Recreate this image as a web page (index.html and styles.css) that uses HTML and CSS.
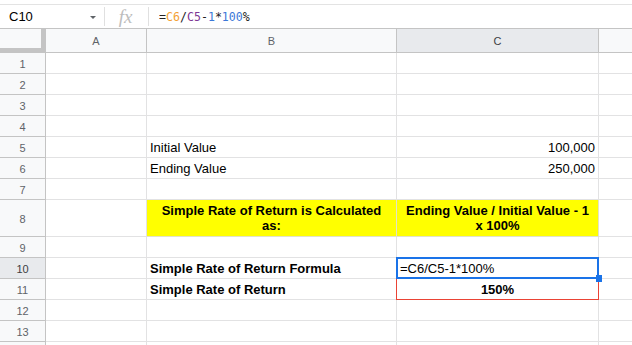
FILE: index.html
```html
<!DOCTYPE html>
<html>
<head>
<meta charset="utf-8">
<link rel="stylesheet" href="styles.css">
</head>
<body>
<div class="fbar">
  <div class="namebox"><span class="ref">C10</span><span class="caret"></span></div>
  <div class="sep"></div>
  <div class="fx">fx</div>
  <div class="sep"></div>
  <div class="formula">=<span class="r1">C6</span>/<span class="r2">C5</span>-<span class="num">1</span>*<span class="num">100</span>%</div>
</div>
<div class="sheet">
  <div class="corner"></div>
  <div class="ch">A</div>
  <div class="ch">B</div>
  <div class="ch sel">C</div>
  <div class="ch last"></div>

  <div class="rh">1</div><div class="c"></div><div class="c"></div><div class="c"></div><div class="c last"></div>
  <div class="rh">2</div><div class="c"></div><div class="c"></div><div class="c"></div><div class="c last"></div>
  <div class="rh">3</div><div class="c"></div><div class="c"></div><div class="c"></div><div class="c last"></div>
  <div class="rh">4</div><div class="c"></div><div class="c"></div><div class="c"></div><div class="c last"></div>
  <div class="rh">5</div><div class="c"></div><div class="c">Initial Value</div><div class="c right">100,000</div><div class="c last"></div>
  <div class="rh">6</div><div class="c"></div><div class="c">Ending Value</div><div class="c right">250,000</div><div class="c last"></div>
  <div class="rh">7</div><div class="c"></div><div class="c"></div><div class="c"></div><div class="c last"></div>
  <div class="rh">8</div><div class="c"></div><div class="c hl">Simple Rate of Return is Calculated as:</div><div class="c hl">Ending Value / Initial Value - 1 x 100%</div><div class="c last"></div>
  <div class="rh">9</div><div class="c"></div><div class="c"></div><div class="c"></div><div class="c last"></div>
  <div class="rh sel">10</div><div class="c"></div><div class="c bold">Simple Rate of Return Formula</div><div class="c active">=C6/C5-1*100%</div><div class="c last"></div>
  <div class="rh">11</div><div class="c"></div><div class="c bold">Simple Rate of Return</div><div class="c bold center redbox">150%</div><div class="c last"></div>
  <div class="rh">12</div><div class="c"></div><div class="c"></div><div class="c"></div><div class="c last"></div>
  <div class="rh">13</div><div class="c"></div><div class="c"></div><div class="c"></div><div class="c last"></div>
  <div class="rh"></div><div class="c"></div><div class="c"></div><div class="c"></div><div class="c last"></div>
</div>
</body>
</html>
```

FILE: styles.css
```css
* { box-sizing: border-box; }
html, body { margin: 0; padding: 0; background: #fff; }
body {
  width: 632px;
  height: 345px;
  overflow: hidden;
  font-family: "Liberation Sans", Arial, sans-serif;
  color: #000;
}
.fbar {
  margin-top: 4px;
  border-top: 1px solid #e3e3e3;
  height: 24px;
  display: flex;
  align-items: center;
}
.namebox {
  width: 104px;
  height: 100%;
  display: flex;
  align-items: center;
  padding-left: 9px;
  padding-right: 8px;
  font-size: 13px;
  color: #000;
}
.ref { flex: 1; }
.caret {
  width: 0;
  height: 0;
  border-left: 3px solid transparent;
  border-right: 3px solid transparent;
  border-top: 3px solid #5f6368;
  margin-top: 1px;
}
.sep {
  width: 1px;
  height: 19px;
  background: #e0e0e0;
}
.fx {
  width: 43px;
  text-align: center;
  font-family: "Liberation Serif", "Times New Roman", serif;
  font-style: italic;
  font-size: 19px;
  color: #bdbdbd;
  line-height: 20px;
  padding-right: 2px;
}
.formula {
  padding-left: 10px;
  font-family: "DejaVu Sans Mono", monospace;
  font-size: 11.6px;
  color: #222;
  padding-top: 1px;
}
.r1 { color: #f4a135; }
.r2 { color: #7e3794; }
.num { color: #3c78d8; }

.sheet {
  display: grid;
  grid-template-columns: 46px 101px 250px 202px 1fr;
  grid-template-rows: 24px repeat(7, 21px) 37px repeat(6, 21px);
  border-top: 1px solid #c4c4c4;
}
.corner {
  background: #f8f9fa;
  border-right: 5px solid #c4c4c4;
  border-bottom: 5px solid #c4c4c4;
}
.ch {
  background: #f8f9fa;
  border-right: 1px solid #c4c4c4;
  border-bottom: 1px solid #c4c4c4;
  display: flex;
  align-items: center;
  justify-content: center;
  font-size: 11px;
  color: #5f6368;
  padding-top: 1px;
}
.ch.sel { background: #e8eaed; color: #3c4043; }
.ch.last { border-right: none; }
.rh {
  background: #f8f9fa;
  border-right: 1px solid #c4c4c4;
  border-bottom: 1px solid #c4c4c4;
  display: flex;
  align-items: center;
  justify-content: center;
  font-size: 11px;
  color: #5f6368;
  padding-top: 1px;
}
.rh.sel { background: #e8eaed; color: #3c4043; }
.c {
  border-right: 1px solid #e2e2e3;
  border-bottom: 1px solid #e2e2e3;
  font-size: 13px;
  line-height: 15px;
  padding: 0 3px 2px 3px;
  display: flex;
  align-items: flex-end;
  white-space: nowrap;
  position: relative;
}
.c.last { border-right: none; }
.c.right { justify-content: flex-end; }
.c.center { justify-content: center; }
.c.bold { font-weight: bold; }
.c.hl {
  background: #ffff00;
  font-weight: bold;
  white-space: normal;
  text-align: center;
  justify-content: center;
  align-items: center;
  padding: 0 6px;
  border-bottom-color: #e2e2c8;
  border-right-color: #e2e2c8;
}
.c.active { z-index: 2; }
.c.active::after {
  content: "";
  position: absolute;
  left: -1px;
  top: -1px;
  right: -1px;
  bottom: -1px;
  border: 2px solid #1a73e8;
}
.c.active::before {
  content: "";
  position: absolute;
  right: -4px;
  bottom: -4px;
  width: 6px;
  height: 7px;
  background: #1a73e8;
  z-index: 3;
}
.c.redbox { z-index: 1; }
.c.redbox::after {
  content: "";
  position: absolute;
  left: -1px;
  top: -1px;
  right: -1px;
  bottom: -1px;
  border: 1px solid #ea4335;
}
```
